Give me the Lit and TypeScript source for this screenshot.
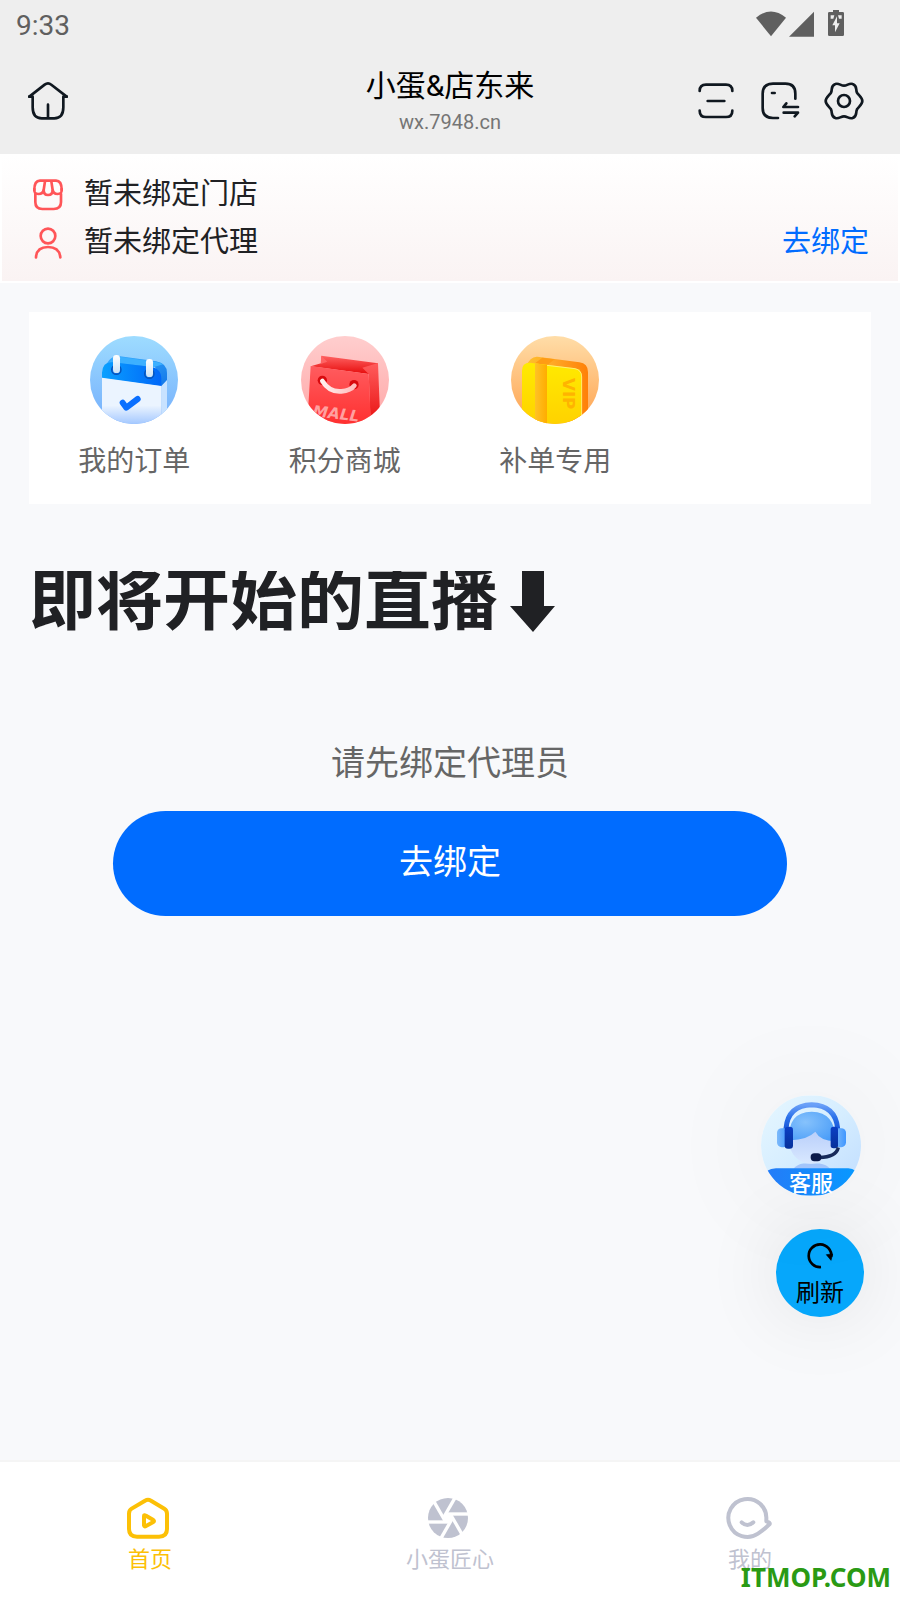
import { LitElement, html, css, svg } from 'lit';
import { customElement, property } from 'lit/decorators.js';

const statusIcons = html`
  <svg class="status-icons" viewBox="225 27 270 84" aria-hidden="true">
    <g fill="#5f5f5f">
      <path d="M228 53 Q273 16 318 53 L273 109Z" />
      <path d="M327 110 L402 35 V110Z" />
      <path d="M459 30h18v6h11q4 0 4 4v64q0 4 -4 4h-40q-4 0 -4 -4v-64q0 -4 4 -4h11z" />
    </g>
    <path fill="#eee" d="M452 46h11l-3 10h-8zM474 46h11v10h-8zM471 49v21h8l-14 27v-21h-8z" />
  </svg>
`;

const homeIcon = html`
  <svg class="bar-icon" viewBox="84 243 120 120" aria-hidden="true">
    <path d="M88 290 L134 254 Q144 246 154 254 L200 290" />
    <path d="M88 290h10v32q0 33 27 33h38q27 0 27 -33v-32h10M144 314v40" />
  </svg>
`;

const scanIcon = html`
  <svg class="bar-icon" viewBox="48 243 120 120" aria-hidden="true">
    <path d="M59 273q0 -19 19 -19h60q19 0 19 19M59 332q0 19 19 19h60q19 0 19 -19M83 303h50" />
  </svg>
`;

const switchIcon = html`
  <svg class="bar-icon" viewBox="240 243 120 120" aria-hidden="true">
    <path d="M346 296v-15q0 -30 -30 -30h-37q-31 0 -31 30v43q0 30 31 30h15M276 279h8" />
    <path d="M354 321h-44l9 -11M311 338h43l-10 11" />
  </svg>
`;

const gearIcon = html`
  <svg class="bar-icon" viewBox="432 243 120 120" aria-hidden="true">
    <path
      d="M547 303C547 293 537 287 531 278C526 268 533 257 518 252C508 248 502 257 492 257C482 257 476 248 466 252C451 257 458 268 453 278C447 287 437 293 437 303C437 313 447 319 453 328C458 338 451 349 466 354C476 358 482 349 492 349C502 349 508 358 518 354C533 349 526 338 531 328C537 319 547 313 547 303Z"
    />
    <circle cx="492" cy="303" r="18" />
  </svg>
`;

const storeIcon = html`
  <svg class="bind-icon" viewBox="94 538 96 96" aria-hidden="true">
    <path d="M101 571Q101 543 118 543H166Q183 543 183 571" />
    <path d="M101 568Q99 583 113 583Q128 583 129 570Q129 586 142 586Q156 586 156 570Q157 583 171 583Q185 583 183 568" />
    <path d="M133 545L129 571M152 545L156 571M104 583V607Q104 628 125 628H159Q181 628 181 607V583" />
  </svg>
`;

const personIcon = html`
  <svg class="bind-icon" viewBox="94 682 96 96" aria-hidden="true">
    <circle cx="142" cy="709" r="22" />
    <path d="M106 773Q108 742 142 742Q176 742 179 773" />
  </svg>
`;

const orderPicture = html`
  <svg class="round-picture" viewBox="210 108 264 264" aria-hidden="true">
    <defs>
      <linearGradient id="sky" x1="0" y1="0" x2="0" y2="1">
        <stop offset="0" stop-color="#9edcff" />
        <stop offset="1" stop-color="#74aefc" />
      </linearGradient>
      <linearGradient id="band" x1="0" y1="0" x2="1" y2="0">
        <stop offset="0" stop-color="#0aa0ff" />
        <stop offset="1" stop-color="#0067f8" />
      </linearGradient>
      <linearGradient id="band-side" x1="0" y1="0" x2="1" y2="1">
        <stop offset="0" stop-color="#3aaeff" />
        <stop offset="1" stop-color="#1478e8" />
      </linearGradient>
      <linearGradient id="sheet" x1="0" y1="0" x2="0" y2="1">
        <stop offset="0.6" stop-color="#ebf4ff" />
        <stop offset="1" stop-color="#a4c8ff" />
      </linearGradient>
      <linearGradient id="ring" x1="0" y1="0" x2="0" y2="1">
        <stop offset="0" stop-color="#fff" />
        <stop offset="1" stop-color="#cde3f6" />
      </linearGradient>
    </defs>
    <rect x="210" y="108" width="264" height="264" fill="url(#sky)" />
    <path fill="#c8e2ff" d="M424 240L441 236V372H424Z" />
    <path fill="url(#band-side)" d="M250 205L268 180Q279 168 295 168L408 184Q441 190 441 219V240L424 258L405 200Z" />
    <path fill="#3cb0ff" d="M268 187L280 175Q286 170 297 170L408 185Q424 188 430 193L402 201Z" />
    <path fill="url(#band)" d="M246 235V218Q248 184 279 187L389 200Q424 204 424 236V259Z" />
    <path fill="url(#sheet)" d="M246 233L424 258V372H246Z" />
    <g fill="#0874ec" stroke="#0752b8" stroke-width="4">
      <circle cx="289" cy="209" r="14" />
      <circle cx="388" cy="221" r="14" />
    </g>
    <g fill="url(#ring)">
      <rect x="279" y="165" width="21" height="54" rx="10" />
      <rect x="378" y="177" width="21" height="54" rx="10" />
    </g>
    <path d="M308 308L319 323L353 297" fill="none" stroke="#0a6fff" stroke-width="18" stroke-linecap="round" stroke-linejoin="round" />
  </svg>
`;

const mallPicture = html`
  <svg class="round-picture" viewBox="843 108 264 264" aria-hidden="true">
    <defs>
      <linearGradient id="blush" x1="0" y1="0" x2="0" y2="1">
        <stop offset="0" stop-color="#ffcece" />
        <stop offset="1" stop-color="#ffa6a6" />
      </linearGradient>
      <linearGradient id="bag" x1="0" y1="0" x2="0" y2="1">
        <stop offset="0" stop-color="#ff5c5f" />
        <stop offset="1" stop-color="#ff3030" />
      </linearGradient>
      <linearGradient id="bag-side" x1="0" y1="0" x2="0" y2="1">
        <stop offset="0" stop-color="#ff5c5c" />
        <stop offset="1" stop-color="#e81010" />
      </linearGradient>
      <linearGradient id="bag-inside" x1="0" y1="0" x2="0" y2="1">
        <stop offset="0" stop-color="#ff6262" />
        <stop offset="1" stop-color="#e60c0c" />
      </linearGradient>
      <linearGradient id="handle" x1="0" y1="0" x2="1" y2="0">
        <stop offset="0" stop-color="#fff1ee" />
        <stop offset="1" stop-color="#ffbdbd" />
      </linearGradient>
    </defs>
    <rect x="843" y="108" width="264" height="264" fill="url(#blush)" />
    <path fill="url(#bag-inside)" d="M904 167L1074 190L1046 222L872 199L903 190Z" />
    <path fill="#ff6464" d="M904 167L922 185L902 192Z" />
    <path fill="url(#bag-side)" d="M1027 203L1074 189L1080 345L1052 372L1046 222Z" />
    <path fill="url(#bag)" d="M872 198L1046 222L1053 372H862Z" />
    <g fill="#d90a0e">
      <circle cx="907" cy="241" r="14" />
      <circle cx="1002" cy="254" r="14" />
    </g>
    <path d="M907 243Q928 277 964 274Q992 272 1003 257" fill="none" stroke="url(#handle)" stroke-width="14" stroke-linecap="round" />
    <text class="picture-text mall-text" x="877" y="348" transform="rotate(7 877 348)">MALL</text>
  </svg>
`;

const vipPicture = html`
  <svg class="round-picture" viewBox="273 108 264 264" aria-hidden="true">
    <defs>
      <linearGradient id="peach" x1="0" y1="0" x2="0" y2="1">
        <stop offset="0" stop-color="#ffdda8" />
        <stop offset="1" stop-color="#ffa24e" />
      </linearGradient>
      <linearGradient id="edge" x1="0" y1="0" x2="1" y2="0">
        <stop offset="0" stop-color="#ffc02c" />
        <stop offset="0.4" stop-color="#ffaa28" />
        <stop offset="1" stop-color="#ff8008" />
      </linearGradient>
      <linearGradient id="face" x1="0" y1="0" x2="0" y2="1">
        <stop offset="0" stop-color="#ffea00" />
        <stop offset="1" stop-color="#ffd200" />
      </linearGradient>
      <linearGradient id="strap" x1="0" y1="0" x2="1" y2="0">
        <stop offset="0" stop-color="#ffc226" />
        <stop offset="1" stop-color="#ffac00" />
      </linearGradient>
    </defs>
    <rect x="273" y="108" width="264" height="264" fill="url(#peach)" />
    <path fill="url(#edge)" d="M318 195L332 178Q341 169 352 170L478 187Q504 191 504 216V330L484 372H440V210Z" />
    <path fill="#ff9c14" d="M345 190L367 173L404 178L381 196Z" />
    <path fill="url(#face)" d="M306 372V212Q306 188 329 188L465 205Q486 209 486 231V372Z" />
    <path d="M381 196L465 206Q485 210 485 231V345" fill="none" stroke="#fff3b0" stroke-width="2" />
    <path fill="url(#strap)" d="M345 190L381 195V372H345Z" />
    <text class="picture-text vip-text" x="430" y="234" transform="rotate(90 430 234)">VIP</text>
  </svg>
`;

const agentPicture = html`
  <svg class="service-picture" viewBox="243 106 300 300" aria-hidden="true">
    <defs>
      <linearGradient id="ice" x1="0" y1="0" x2="1" y2="1">
        <stop offset="0" stop-color="#e6f7ff" />
        <stop offset="0.5" stop-color="#d5edff" />
        <stop offset="1" stop-color="#bfdcff" />
      </linearGradient>
      <radialGradient id="hair" cx="0.35" cy="0.35" r="0.8">
        <stop offset="0" stop-color="#86c2fc" />
        <stop offset="1" stop-color="#479bf8" />
      </radialGradient>
      <linearGradient id="skin" x1="0" y1="0" x2="0" y2="1">
        <stop offset="0.3" stop-color="#b9cffa" />
        <stop offset="1" stop-color="#d9e8ff" />
      </linearGradient>
      <linearGradient id="band-blue" x1="0" y1="0" x2="0" y2="1">
        <stop offset="0" stop-color="#6aa0f8" />
        <stop offset="0.5" stop-color="#2c72ea" />
        <stop offset="1" stop-color="#1857d8" />
      </linearGradient>
      <linearGradient id="cup" x1="0" y1="0" x2="1" y2="0">
        <stop offset="0" stop-color="#7dbafa" />
        <stop offset="1" stop-color="#3f96ff" />
      </linearGradient>
      <linearGradient id="cup-dark" x1="0" y1="0" x2="0" y2="1">
        <stop offset="0" stop-color="#0b3fc4" />
        <stop offset="1" stop-color="#06309a" />
      </linearGradient>
      <linearGradient id="desk" x1="0" y1="0" x2="1" y2="0">
        <stop offset="0" stop-color="#247cf8" />
        <stop offset="1" stop-color="#0898ff" />
      </linearGradient>
    </defs>
    <rect x="243" y="106" width="300" height="300" fill="url(#ice)" />
    <path fill="#a3c5fb" d="M340 326Q352 312 370 310H418Q440 313 450 326Z" />
    <ellipse cx="393" cy="241" rx="66" ry="70" fill="url(#skin)" />
    <path fill="url(#hair)" d="M328 240Q322 156 395 155Q468 156 466 244Q420 242 406 215Q380 241 328 240Z" />
    <path d="M318 208V205Q324 136 395 134Q466 136 473 205V208" fill="none" stroke="url(#band-blue)" stroke-width="15" />
    <rect x="291" y="204" width="34" height="57" rx="14" fill="url(#cup)" />
    <rect x="464" y="204" width="34" height="57" rx="14" fill="url(#cup)" />
    <rect x="314" y="200" width="25" height="66" rx="10" fill="url(#cup-dark)" />
    <rect x="452" y="200" width="22" height="64" rx="8" fill="url(#cup-dark)" />
    <path d="M475 262Q468 291 418 292" fill="none" stroke="#172a5a" stroke-width="10" />
    <rect x="392" y="279" width="32" height="24" rx="11" fill="#0b1a4a" />
    <path fill="url(#desk)" d="M262 332Q272 324 288 324H505Q518 324 526 332L500 406H290Z" />
  </svg>
`;

const refreshIcon = html`
  <svg class="refresh-icon" viewBox="379 545 84 84" aria-hidden="true">
    <path d="M424 620A34 34 0 1 1 455 589" fill="none" stroke="#000" stroke-width="8" />
    <path d="M440 583L459 581L454 600Z" stroke="#000" stroke-width="2" stroke-linejoin="round" />
  </svg>
`;

const tabIcons: Record<string, unknown> = {
  home: svg`
    <g fill="none" stroke="currentColor" stroke-width="12" stroke-linejoin="round">
      <path d="M9 53Q9 43 17 38L57 14Q66 9 75 14L115 38Q123 43 123 53V99Q123 122 99 122H33Q9 122 9 99Z" />
      <path d="M54 60V88Q55 93 60 90L82 78Q86 75 82 72L60 59Q54 56 54 60Z" />
    </g>
  `,
  craft: svg`
    <g transform="translate(66 66)">
      <circle r="60" fill="currentColor" />
      <circle r="14" fill="#fff" />
      <g stroke="#fff" stroke-width="10">
        ${[0, 60, 120, 180, 240, 300].map((deg) => svg`<path d="M7 12H-66" transform="rotate(${deg})" />`)}
      </g>
    </g>
  `,
  mine: svg`
    <g fill="none" stroke="currentColor" stroke-width="12" stroke-linecap="round" stroke-linejoin="round">
      <path d="M121 69A57 57 0 1 0 96 113Q114 101 131 84Q133 80 121 76Z" />
      <path d="M47 79Q64 95 82 79" />
    </g>
  `,
};

/**
 * <tab-link> - One entry of the bottom tab bar.
 */
@customElement('tab-link')
export class TabLink extends LitElement {
  static override styles = css`
    :host {
      flex: 1;
      display: flex;
      justify-content: center;
      color: #bfc2d0;
    }

    :host([active]) {
      color: #fcc006;
    }

    .tab {
      display: flex;
      flex-direction: column;
      align-items: center;
      gap: 4px;
      color: inherit;
      text-decoration: none;
      font-size: 22px;
      line-height: 32px;
    }

    .tab-icon {
      width: 48px;
      height: 44px;
    }
  `;

  @property({ type: String })
  icon = 'home';

  @property({ type: String })
  label = '';

  @property({ type: Boolean, reflect: true })
  active = false;

  override render() {
    return html`
      <a class="tab" href="#${this.icon}">
        <svg class="tab-icon" viewBox="0 0 144 132" aria-hidden="true">${tabIcons[this.icon]}</svg>
        <span>${this.label}</span>
      </a>
    `;
  }
}

const shortcuts = [
  { label: '我的订单', href: '#orders', picture: orderPicture },
  { label: '积分商城', href: '#mall', picture: mallPicture },
  { label: '补单专用', href: '#vip', picture: vipPicture },
];

@customElement('app-root')
export class AppRoot extends LitElement {
  static override styles = css`
    :host {
      position: relative;
      display: flex;
      flex-direction: column;
      min-height: 100vh;
      overflow: hidden;
      background: #f8f9fb;
      color: #202124;
      font-family: Roboto, 'Noto Sans CJK SC', sans-serif;
    }

    a {
      color: inherit;
      text-decoration: none;
    }

    button {
      margin: 0;
      padding: 0;
      border: 0;
      background: none;
      color: inherit;
      font: inherit;
      cursor: pointer;
    }

    svg {
      display: block;
    }

    .top {
      background: #eeeeee;
    }

    .status {
      display: flex;
      align-items: center;
      justify-content: space-between;
      box-sizing: border-box;
      height: 48px;
      padding: 2px 55px 0 16px;
      color: #5f5f5f;
      font-size: 28px;
    }

    .status-icons {
      width: 90px;
      height: 28px;
      margin-bottom: 4px;
    }

    .bar {
      display: grid;
      grid-template-columns: 1fr auto 1fr;
      align-items: center;
      height: 106px;
      padding: 0 36px 0 28px;
    }

    .bar-start {
      display: flex;
    }

    .bar-actions {
      display: flex;
      justify-content: flex-end;
      gap: 24px;
    }

    .bar-icon {
      width: 40px;
      height: 40px;
      fill: none;
      stroke: #101820;
      stroke-width: 8;
      stroke-linecap: round;
      stroke-linejoin: round;
    }

    .bar-title {
      padding-left: 8px;
      text-align: center;
    }

    .bar-title h1 {
      margin: 0;
      color: #000;
      font-size: 30px;
      font-weight: 400;
      line-height: 40px;
    }

    .bar-title p {
      margin: 2px 0 0;
      color: #757575;
      font-size: 20px;
      line-height: 28px;
    }

    .bind {
      padding: 11px 29px 18px 30px;
      border: 2px solid #fff;
      background: linear-gradient(#fff, #faf3f3);
      font-size: 29px;
    }

    .bind-row {
      display: flex;
      align-items: center;
      height: 48px;
    }

    .bind-row a {
      margin-left: auto;
      color: #006cff;
    }

    .bind-icon {
      width: 32px;
      height: 32px;
      margin: 8px 20px 0 0;
      fill: none;
      stroke: #ff5558;
      stroke-width: 8;
      stroke-linecap: round;
    }

    .content {
      flex: 1;
      padding: 29px;
    }

    .shortcuts {
      display: grid;
      grid-template-columns: repeat(4, 1fr);
      padding: 24px 0 20px;
      background: #fff;
    }

    .shortcut {
      display: flex;
      flex-direction: column;
      align-items: center;
      gap: 16px;
      color: #666;
      font-size: 28px;
      line-height: 44px;
    }

    .round-picture {
      width: 88px;
      height: 88px;
      border-radius: 50%;
    }

    .picture-text {
      font-family: 'DejaVu Sans', sans-serif;
      font-weight: 700;
    }

    .mall-text {
      fill: #ffa0a0;
      font-size: 46px;
      font-style: italic;
    }

    .vip-text {
      fill: #ffb400;
      font-size: 50px;
    }

    .live-title {
      display: flex;
      gap: 12px;
      height: 61px;
      margin: 67px 0 0;
      overflow: hidden;
      font-size: 67px;
      line-height: 61px;
    }

    .live-arrow {
      width: 45px;
      height: 61px;
      fill: #202124;
    }

    .prompt {
      margin: 106px 0 0;
      color: #666;
      font-size: 34px;
      line-height: 50px;
      text-align: center;
    }

    .bind-button {
      display: block;
      width: 80%;
      height: 105px;
      margin: 23px auto 0;
      padding-bottom: 8px;
      border-radius: 53px;
      background: #006cff;
      color: #fff;
      font-size: 34px;
    }

    .floating {
      position: absolute;
      right: 36px;
      bottom: 283px;
      display: flex;
      flex-direction: column;
      align-items: flex-end;
      gap: 33px;
    }

    .service {
      position: relative;
      display: flex;
      align-items: flex-end;
      justify-content: center;
      width: 100px;
      height: 101px;
      margin-right: 3px;
      border-radius: 50%;
      box-shadow: 0 0 120px rgba(0, 0, 0, 0.07);
      color: #fff;
      font-size: 22px;
      font-weight: 500;
      line-height: 24px;
    }

    .service-picture {
      position: absolute;
      inset: 0;
      width: 100%;
      height: 100%;
      border-radius: 50%;
    }

    .service-label {
      position: relative;
    }

    .refresh {
      display: flex;
      flex-direction: column;
      align-items: center;
      gap: 1px;
      width: 88px;
      height: 88px;
      padding-top: 13px;
      border-radius: 50%;
      background: #06a7fb;
      box-shadow: 0 0 80px rgba(0, 0, 0, 0.1);
      color: #000;
      font-size: 24px;
      line-height: 44px;
    }

    .refresh-icon {
      width: 28px;
      height: 28px;
    }

    .tabs {
      display: flex;
      height: 104px;
      padding-top: 34px;
      border-top: 2px solid #f5f5f5;
      background: #fff;
    }

    .watermark {
      position: absolute;
      right: 9px;
      bottom: 5px;
      color: #2a9a14;
      font-family: 'Noto Sans', sans-serif;
      font-size: 26px;
      font-weight: 700;
      line-height: 36px;
    }
  `;

  override render() {
    return html`
      <header class="top">
        <div class="status"><span>9:33</span>${statusIcons}</div>
        <div class="bar">
          <div class="bar-start"><button aria-label="首页">${homeIcon}</button></div>
          <div class="bar-title">
            <h1>小蛋&amp;店东来</h1>
            <p>wx.7948.cn</p>
          </div>
          <div class="bar-actions">
            <button aria-label="扫一扫">${scanIcon}</button>
            <button aria-label="切换">${switchIcon}</button>
            <button aria-label="设置">${gearIcon}</button>
          </div>
        </div>
      </header>

      <section class="bind">
        <div class="bind-row">${storeIcon}<span>暂未绑定门店</span></div>
        <div class="bind-row">${personIcon}<span>暂未绑定代理</span><a href="#bind">去绑定</a></div>
      </section>

      <main class="content">
        <nav class="shortcuts">
          ${shortcuts.map(
            (item) => html`<a class="shortcut" href=${item.href}>${item.picture}<span>${item.label}</span></a>`
          )}
        </nav>
        <h2 class="live-title">
          <span>即将开始的直播</span>
          <svg class="live-arrow" viewBox="0 0 45 61" aria-hidden="true">
            <path d="M12 0H34V35H45L23 61L0 35H12Z" />
          </svg>
        </h2>
        <p class="prompt">请先绑定代理员</p>
        <button class="bind-button">去绑定</button>
      </main>

      <nav class="tabs">
        <tab-link icon="home" label="首页" active></tab-link>
        <tab-link icon="craft" label="小蛋匠心"></tab-link>
        <tab-link icon="mine" label="我的"></tab-link>
      </nav>

      <div class="floating">
        <button class="service">${agentPicture}<span class="service-label">客服</span></button>
        <button class="refresh">${refreshIcon}<span>刷新</span></button>
      </div>
      <div class="watermark">ITMOP.COM</div>
    `;
  }
}

declare global {
  interface HTMLElementTagNameMap {
    'tab-link': TabLink;
    'app-root': AppRoot;
  }
}
